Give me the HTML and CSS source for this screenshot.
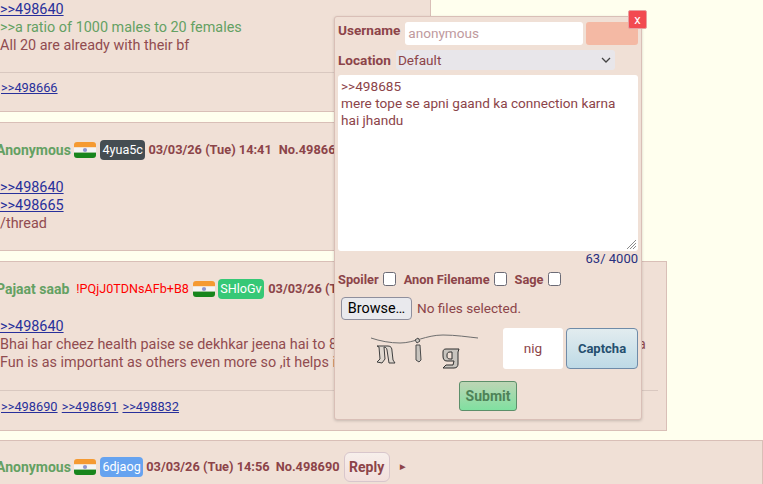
FILE: index.html
```html
<!DOCTYPE html>
<html lang="en">
<head>
<meta charset="utf-8">
<title>Thread</title>
<link rel="stylesheet" href="styles.css">
</head>
<body>
<svg class="defs" width="0" height="0" aria-hidden="true">
  <symbol id="flag-in" viewBox="0 0 22 16">
    <rect width="22" height="5.4" fill="#f59a32"/>
    <rect y="5.4" width="22" height="5.2" fill="#f5f5f5"/>
    <rect y="10.6" width="22" height="5.4" fill="#18851c"/>
    <circle cx="11" cy="8" r="2.1" fill="#8f95cf"/>
  </symbol>
</svg>
<main class="thread">
  <article class="post post-first">
    <div class="message">
      <a href="#">&gt;&gt;498640</a><br>
      <span class="quote">&gt;&gt;a ratio of 1000 males to 20 females</span><br>
      All 20 are already with their bf<br>
    </div>
    <div class="replies"><a href="#">&gt;&gt;498666</a></div>
  </article>
  <article class="post post-second">
    <header class="post-info">
      <span class="name">Anonymous</span>
      <svg class="flag"><use href="#flag-in"/></svg>
      <span class="uid uid-dark">4yua5c</span>
      <span class="date">03/03/26 (Tue) 14:41</span>
      <span class="no">No.498665</span>
    </header>
    <div class="message">
      <a href="#">&gt;&gt;498640</a><br>
      <a href="#">&gt;&gt;498665</a><br>
      /thread
    </div>
  </article>
  <article class="post post-third">
    <header class="post-info">
      <span class="name">Pajaat saab</span>
      <span class="trip">!PQjJ0TDNsAFb+B8</span>
      <svg class="flag flag-tight"><use href="#flag-in"/></svg>
      <span class="uid uid-green">SHloGv</span>
      <span class="date">03/03/26 (Tue) 14:52</span>
    </header>
    <div class="message">
      <a href="#">&gt;&gt;498640</a><br>
      Bhai har cheez health paise se dekhkar jeena hai to 80 saal tak jeene ka kya faayda yaar zindagi jeena<br>
      Fun is as important as others even more so ,it helps in living life
    </div>
    <div class="replies">
      <a href="#">&gt;&gt;498690</a>
      <a href="#">&gt;&gt;498691</a>
      <a href="#">&gt;&gt;498832</a>
    </div>
  </article>
  <article class="post post-fourth">
    <header class="post-info">
      <span class="name">Anonymous</span>
      <svg class="flag"><use href="#flag-in"/></svg>
      <span class="uid uid-blue">6djaog</span>
      <span class="date">03/03/26 (Tue) 14:56</span>
      <span class="no">No.498690</span>
      <button class="reply" type="button">Reply</button>
      <span class="arrow">&#9654;</span>
    </header>
  </article>
</main>
<form class="quick-reply">
  <button class="close" type="button">x</button>
  <div class="row row-user">
    <label class="label label-user">Username</label>
    <input class="user-input" type="text" placeholder="anonymous">
    <span class="swatch"></span>
  </div>
  <div class="row row-location">
    <label class="label">Location</label>
    <div class="select">Default
      <svg class="chev" width="10" height="6" viewBox="0 0 10 6"><path d="M1 1l4 4 4-4" fill="none" stroke="#444" stroke-width="1.3"/></svg>
    </div>
  </div>
  <div class="textarea">&gt;&gt;498685<br>mere tope se apni gaand ka connection karna<br>hai jhandu
    <svg class="grip" width="11" height="11" viewBox="0 0 11 11"><path d="M1 10L10 1M4 10l6-6M7 10l3-3" stroke="#8a8a8a" stroke-width="1" fill="none"/></svg>
  </div>
  <div class="count">63/ 4000</div>
  <div class="row row-checks">
    <label class="label label-small">Spoiler</label><span class="check"></span>
    <label class="label label-small label-gap">Anon Filename</label><span class="check"></span>
    <label class="label label-small label-gap">Sage</label><span class="check"></span>
  </div>
  <div class="row row-file">
    <span class="browse">Browse…</span>
    <span class="nofile">No files selected.</span>
  </div>
  <div class="row row-captcha">
    <svg class="captcha-img" width="151" height="41" viewBox="0 0 151 41">
      <path d="M33 10C42 13 52 15 62 15C76 15 88 7 105 7C118 7 130 9 140 10" fill="none" stroke="#6e6e6e" stroke-width="1"/>
      <path d="M39 18h11c3 0 4 2 4 5l1 9 2 3h-6l-2-13c0-2-2-3-3-3l1 12-3 4-5-1 3-3-1-12z" fill="#e0d8d0" stroke="#3f3f3f" stroke-width="1"/>
      <path d="M78 17h4l1 15-2 2-3-2zM77 12l3-2 2 3-3 2z" fill="#c8c4be" stroke="#4a4a4a" stroke-width="1"/>
      <path d="M108 21h13l-1 3v12c0 2-1 4-4 4h-11l3-3h7l1-4h-7c-3 0-4-2-4-5v-4c0-2 1-3 3-3zM112 24c-2 0-3 1-3 3v1c0 3 2 3 5 3v-7z" fill="#c8c4be" stroke="#2f2f2f" stroke-width="1"/>
    </svg>
    <div class="captcha-input">nig</div>
    <button class="captcha-btn" type="button">Captcha</button>
  </div>
  <div class="row row-submit"><button class="submit" type="button">Submit</button></div>
</form>
</body>
</html>
```
FILE: styles.css
```css
* { box-sizing: border-box; }
html, body {
  margin: 0;
  height: 484px;
  overflow: hidden;
}
body {
  position: relative;
  background: #ffffee;
  color: #914c50;
  font: 14.4px/18px Roboto, sans-serif;
}
.defs { position: absolute; }
a { color: #28309b; text-decoration: underline; }
.thread { display: flex; flex-direction: column; margin-left: -2px; }
.post {
  background: #f0e0d6;
  border: solid #d9bfb7;
  border-width: 0 1px 1px 0;
  padding-left: 2px;
}
.post-first { width: 433px; height: 112px; }
.post-second { width: 433px; height: 129px; margin-top: 10px; border-top-width: 1px; }
.post-third { width: 669px; height: 170px; margin-top: 10px; border-top-width: 1px; }
.post-fourth { width: 765px; height: 60px; margin-top: 9px; border-top-width: 1px; }
.post-info {
  display: flex;
  align-items: center;
  height: 20px;
  margin: 17px 0 0 -4px;
  font-weight: 700;
  font-size: 14px;
  white-space: nowrap;
}
.post-fourth .post-info { margin-top: 16px; }
.name { color: #64a163; margin-right: 3px; }
.trip { color: #f00; font-weight: 400; font-size: 12.6px; margin-left: 4px; margin-right: 4px; }
.flag { width: 22px; height: 16px; border-radius: 3px; margin-right: 4px; flex: none; }
.flag-tight { margin-right: 3px; }
.uid {
  color: #fff;
  font-weight: 400;
  font-size: 12.6px;
  height: 20px;
  line-height: 20px;
  padding: 0 2.5px;
  border-radius: 4px;
  margin-right: 3px;
}
.uid-dark { background: #454d52; }
.uid-green { background: #36c876; margin-right: 4px; }
.uid-blue { background: #66a3f0; }
.date, .no { color: #8c4449; font-size: 12.8px; }
.no { margin-left: 6px; }
.post-second .no { margin-left: 7px; }
.message { white-space: nowrap; overflow: hidden; padding-top: 1px; }
.post-info + .message { margin-top: 18px; }
.quote { color: #64a163; }
.replies {
  margin-top: 18px;
  border-top: 1px solid #d9c8c0;
  padding-top: 7px;
  margin-left: -2px;
  padding-left: 3px;
  font-size: 12.8px;
  line-height: 16px;
}
.post-first .message { height: 54px; }
.replies a { margin-right: 1px; }
.post-third .replies { margin-right: 8px; padding-top: 8px; }
.reply {
  width: 46px;
  height: 30px;
  margin-left: 4px;
  padding: 0;
  font: 700 14px Roboto, sans-serif;
  color: #8c4449;
  background: linear-gradient(#f7efeb, #f2dfdc);
  border: 1px solid #d8c6cc;
  border-radius: 6px;
}
.arrow { font-size: 7px; margin-left: 10px; color: #8c4449; }

.quick-reply {
  position: absolute;
  left: 334px;
  top: 16px;
  width: 308px;
  height: 404px;
  background: #f0e0d6;
  border: 1px solid #d9bfb7;
  border-radius: 3px;
  box-shadow: 0 1px 3px rgba(0,0,0,.18);
  padding: 4px 3px 0 3px;
}
.close {
  position: absolute;
  right: -6px;
  top: -7px;
  width: 19px;
  height: 19px;
  padding: 0;
  background: #f24a50;
  color: #fff;
  border: 1px solid #e8a0a0;
  border-radius: 2px;
  font: 400 13px Roboto, sans-serif;
}
.row { display: flex; align-items: center; }
.label { font-weight: 700; font-size: 13.6px; color: #8c4449; white-space: nowrap; }
.label-user { align-self: flex-start; line-height: 18px; }
.label-small { font-size: 12.8px; }
.row-user { height: 24px; }
.user-input {
  width: 178px;
  height: 23px;
  margin-left: 5px;
  padding: 0 3px 1px;
  align-self: flex-end;
  background: #fff;
  border: 0;
  border-radius: 3px;
  font: 13.6px Roboto, sans-serif;
}
.user-input::placeholder { color: #c09a9e; opacity: 1; }
.swatch { width: 52px; height: 23px; margin-left: 3px; align-self: flex-end; background: #f4b9a4; border-radius: 3px; }
.row-location { height: 20px; margin-top: 5px; }
.select {
  position: relative;
  width: 219px;
  height: 20px;
  margin-left: 5px;
  padding-left: 2px;
  background: #e8e6ea;
  border-radius: 3px;
  font-size: 13.6px;
  line-height: 20px;
  color: #8c4449;
}
.chev { position: absolute; right: 4px; top: 7px; }
.textarea {
  position: relative;
  height: 176px;
  margin-top: 5px;
  padding: 3px;
  background: #fff;
  border-radius: 3px;
  line-height: 17px;
  font-size: 13.6px;
  color: #8c4449;
}
.grip { position: absolute; right: 1px; bottom: 1px; }
.count { text-align: right; color: #28307f; font-size: 13px; line-height: 15px; }
.row-checks { height: 18px; margin-top: 5px; }
.check { width: 13px; height: 14px; margin-left: 4px; background: #fff; border: 1px solid #6b6b76; border-radius: 2.5px; margin-top: -2px; flex: none; }
.label-gap { margin-left: 8px; }
.row-file { margin-top: 8px; height: 24px; padding-left: 3px; align-items: flex-start; }
.browse {
  width: 71px;
  height: 23px;
  background: #e9e9ed;
  border: 1px solid #8f8f9d;
  border-radius: 4px;
  color: #000;
  font-size: 14.4px;
  line-height: 21px;
  text-align: center;
  white-space: nowrap;
}
.nofile { margin-left: 5px; font-size: 13.6px; line-height: 23px; color: #8c4449; }
.row-captcha { height: 41px; margin-top: 7px; }
.captcha-img { flex: none; }
.captcha-input {
  width: 60px;
  height: 41px;
  margin-left: 14px;
  background: #fff;
  border-radius: 3px;
  text-align: center;
  line-height: 41px;
  font-size: 13.6px;
  color: #8c4449;
}
.captcha-btn {
  width: 72px;
  height: 41px;
  margin-left: 3px;
  padding: 0;
  background: linear-gradient(#e2ecef, #bedae6);
  border: 1px solid #6f8ba8;
  border-radius: 4px;
  color: #254f6f;
  font: 700 13px Roboto, sans-serif;
}
.row-submit { justify-content: center; margin-top: 12px; }
.submit {
  width: 58px;
  height: 30px;
  padding: 0;
  background: linear-gradient(#bdd5b5, #80e0a0);
  border: 1px solid #5c8f6a;
  border-radius: 3px;
  color: #4e8257;
  font: 700 14px Roboto, sans-serif;
}
```
